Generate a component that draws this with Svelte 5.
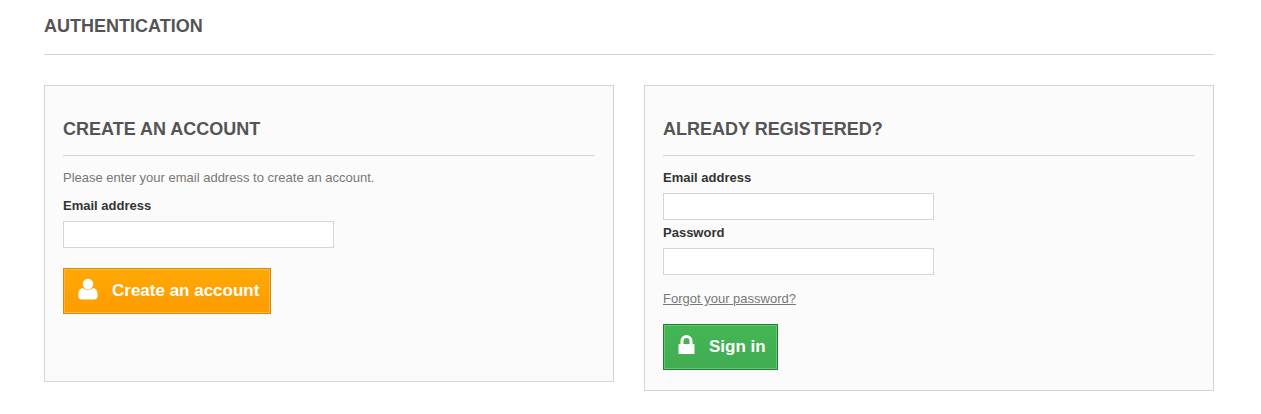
<script lang="ts">
	let newEmail = $state('');
	let email = $state('');
	let password = $state('');

	function submit(event: SubmitEvent) {
		event.preventDefault();
	}
</script>

<main class="page">
	<h1>Authentication</h1>

	<div class="columns">
		<form class="box" onsubmit={submit}>
			<h2>Create an account</h2>
			<p class="intro">Please enter your email address to create an account.</p>
			<div class="field">
				<label for="email-create">Email address</label>
				<input id="email-create" type="email" bind:value={newEmail} />
			</div>
			<button class="button create" type="submit">
				<svg width="20" height="22" viewBox="0 0 20 22" aria-hidden="true">
					<circle cx="10" cy="6" r="5.3" />
					<path d="M5 10C6.300 11.300 8 11.800 10 11.800s3.700-.5 5-1.800c3.500.2 4.700 3.500 4.700 7.500 0 2.500-1.300 4-3.500 4H3.800c-2.200 0-3.500-1.500-3.500-4 0-4 1.200-7.300 4.700-7.500z" />
				</svg>
				<span>Create an account</span>
			</button>
		</form>

		<form class="box" onsubmit={submit}>
			<h2>Already registered?</h2>
			<div class="field">
				<label for="email">Email address</label>
				<input id="email" type="email" bind:value={email} />
			</div>
			<div class="field">
				<label for="password">Password</label>
				<input id="password" type="password" bind:value={password} />
			</div>
			<p class="forgot"><a href="#password-recovery">Forgot your password?</a></p>
			<button class="button login" type="submit">
				<svg width="17" height="20" viewBox="0 0 17 20" aria-hidden="true">
					<path fill-rule="evenodd" d="M2.500 9V6a6 6 0 0 1 12 0v3h1c.6 0 1 .4 1 1v8c0 .6-.4 1-1 1h-14c-.6 0-1-.4-1-1v-8c0-.6.4-1 1-1zm3 0h6V6a3 3 0 0 0-6 0z" />
				</svg>
				<span>Sign in</span>
			</button>
		</form>
	</div>
</main>

<style>
	:global(body) {
		margin: 0;
		background: #fff;
	}

	.page {
		max-width: 1170px;
		margin: 0 auto;
		padding: 16px 47px 23px 44px;
		font: 13px/18px 'Liberation Sans', Arial, sans-serif;
		color: #777;
	}

	h1,
	h2 {
		margin: 0;
		border-bottom: 1px solid #d6d4d4;
		font-size: 18px;
		line-height: 20px;
		font-weight: 700;
		text-transform: uppercase;
		color: #555454;
	}

	h1 {
		margin-bottom: 30px;
		padding-bottom: 18px;
	}

	h2 {
		margin-bottom: 13px;
		padding-bottom: 16px;
	}

	.columns {
		display: flex;
		align-items: flex-start;
		gap: 30px;
	}

	.box {
		box-sizing: border-box;
		flex: 1;
		min-width: 0;
		min-height: 297px;
		padding: 33px 18px 20px;
		border: 1px solid #d6d4d4;
		background: #fbfbfb;
	}

	.intro {
		margin: 0 0 10px;
	}

	label {
		display: block;
		margin-bottom: 6px;
		font-weight: 700;
		color: #333;
	}

	input {
		display: block;
		box-sizing: border-box;
		width: 100%;
		max-width: 271px;
		height: 27px;
		margin-bottom: 4px;
		padding: 3px 5px;
		border: 1px solid #d6d4d4;
		background: #fff;
		font: inherit;
		color: #9c9b9b;
	}

	.forgot {
		margin: 15px 0 16px;
	}

	a {
		color: #777;
	}

	.button {
		display: flex;
		align-items: center;
		height: 46px;
		padding: 0 11px 0 14px;
		border: 1px solid;
		font: 700 17px/20px 'Liberation Sans', Arial, sans-serif;
		color: #fff;
		cursor: pointer;
	}

	.button svg {
		margin: 0 14px 4px 0;
		fill: #fff;
	}

	.create {
		margin-top: 20px;
		border-color: #d28a16;
		background: linear-gradient(#ffa904, #fe9b00);
		box-shadow: inset 0 0 0 1px #ffb52e;
	}

	.login {
		border-color: #247f32;
		background: linear-gradient(#43b754, #42ac52);
		box-shadow: inset 0 0 0 1px #62c870;
	}

	@media (max-width: 767px) {
		.page {
			padding: 16px;
		}

		.columns {
			flex-direction: column;
			align-items: stretch;
		}
	}
</style>
